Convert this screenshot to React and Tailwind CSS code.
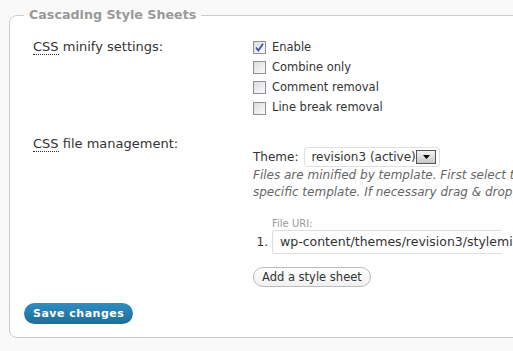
import { useState } from 'react';

function Check({ checked, label }) {
  return (
    <label className="flex items-center h-[20.3px] gap-[6px] text-[11.5px] text-[#333]">
      <span className="relative w-[13px] h-[13px] border border-[#8f8f9d] bg-gradient-to-br from-[#dcdcdc] to-[#fbfbfb] flex items-center justify-center">
        {checked && (
          <svg width="11" height="11" viewBox="0 0 11 11">
            <path d="M2 5.5 L4.3 8.5 L9 1.8" fill="none" stroke="#3a4fa0" strokeWidth="1.7" />
          </svg>
        )}
      </span>
      {label}
    </label>
  );
}

export default function App() {
  const [opts] = useState([
    { label: 'Enable', checked: true },
    { label: 'Combine only', checked: false },
    { label: 'Comment removal', checked: false },
    { label: 'Line break removal', checked: false },
  ]);

  return (
    <div className="w-[513px] h-[351px] overflow-hidden bg-[#f9f9f9] pt-[7px]" style={{ fontFamily: '"DejaVu Sans", Verdana, sans-serif' }}>
      <fieldset className="ml-[9px] w-[640px] border border-[#cccccc] rounded-[8px] bg-white px-[14px] pb-[13px]">
        <legend className="px-[5px] text-[12.7px] leading-[16px] font-bold text-[#999]">Cascading Style Sheets</legend>

        {/* minify */}
        <div className="flex pt-[14px]">
          <div className="w-[229px] pl-[9px] text-[13px] leading-[20px] text-[#333]">
            <abbr className="no-underline border-b border-dotted border-[#333]">CSS</abbr> minify settings:
          </div>
          <div className="flex flex-col">
            {opts.map((o) => (
              <Check key={o.label} label={o.label} checked={o.checked} />
            ))}
          </div>
        </div>

        {/* file management */}
        <div className="flex pt-[16px]">
          <div className="w-[229px] pl-[9px] text-[13px] leading-[20px] text-[#333]">
            <abbr className="no-underline border-b border-dotted border-[#333]">CSS</abbr> file management:
          </div>
          <div className="flex flex-col pt-[13px]">
            <div className="flex items-center gap-[6px] text-[12px] text-[#333]">
              <span>Theme:</span>
              <div className="flex items-center h-[20px] w-[136px] border border-[#dfdfdf] rounded-[3px] bg-white pl-[6px] pr-[3px]">
                <span className="flex-1 whitespace-nowrap">revision3 (active)</span>
                <span className="w-[20px] h-[14px] border border-[#555] bg-gradient-to-b from-[#f4f4f4] to-[#c8c8c8] flex items-center justify-center">
                  <svg width="7" height="4" viewBox="0 0 7 4"><path d="M0 0 H7 L3.5 4 Z" fill="#000" /></svg>
                </span>
              </div>
            </div>
            <div className="w-[250px] text-[12px] leading-[17px] italic text-[#666] whitespace-nowrap">
              <div>Files are minified by template. First select the theme you would like to manage, then assign files to a</div>
              <div>specific template. If necessary drag &amp; drop to reorder the files.</div>
            </div>
            <div className="pl-[19px] pt-[17px] text-[10px] leading-[12px] text-[#999]">File URI:</div>
            <div className="flex items-center gap-[4px]">
              <span className="w-[15px] text-right text-[12px] text-[#333]">1.</span>
              <div className="h-[24px] w-[230px] border border-[#dfdfdf] border-r-0 rounded-l-[3px] bg-white pl-[7px] flex items-center text-[12.5px] text-[#333] whitespace-nowrap overflow-visible">
                wp-content/themes/revision3/styleminify.css
              </div>
            </div>
            <div className="pt-[10px]">
              <button className="h-[20px] px-[8px] border border-[#bbb] rounded-full bg-gradient-to-b from-white to-[#f0f0f0] text-[11.5px] leading-[18px] text-[#333]">
                Add a style sheet
              </button>
            </div>
          </div>
        </div>

        <div className="pt-[12px]">
          <button className="h-[21px] px-[9px] rounded-full bg-gradient-to-b from-[#2e8dc0] to-[#1f6d99] text-white text-[11px] font-bold tracking-[0.5px] leading-[21px]">
            Save changes
          </button>
        </div>
      </fieldset>
    </div>
  );
}
